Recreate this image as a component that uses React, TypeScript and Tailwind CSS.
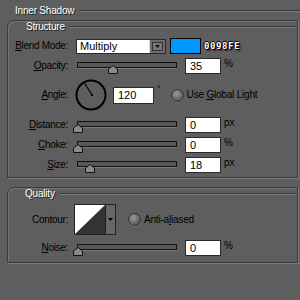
import React from 'react'

const label = "w-[60px] shrink-0 text-right text-[10px] leading-[12px] tracking-[-0.3px] text-black"
const head = "text-[10px] leading-[12px] tracking-[-0.2px] text-white [text-shadow:1px_1px_0_#222]"
const etched = "flex-1 h-[2px] border-t border-[#3a3a3a] border-b border-b-[#7c7c7c]"

function U({ c }: { c: string }) {
  return <span className="underline underline-offset-[1px]">{c}</span>
}

function Slider({ pos }: { pos: number }) {
  return (
    <div className="relative w-[104px] h-[16px] ml-[5px] shrink-0">
      <div className="absolute left-[4px] right-0 top-[4px] h-[6px] border border-[#111] bg-[#585858] shadow-[0_1px_0_#7a7a7a]" />
      {/* thumb */}
      <svg className="absolute top-[7px]" style={{ left: pos }} width="10" height="9" viewBox="0 0 10 9">
        <polygon points="0.5,8.5 0.5,4 5,0.5 9.5,4 9.5,8.5" fill="#8a8a8a" stroke="#111" strokeWidth="1" />
      </svg>
    </div>
  )
}

function NumBox({ value, w = 36, h = 16 }: { value: string; w?: number; h?: number }) {
  return (
    <div
      className="ml-[8px] shrink-0 border border-[#2a2a2a] bg-white pl-[4px] text-[11px] leading-[14px] text-black flex items-center"
      style={{ width: w, height: h }}
    >
      {value}
    </div>
  )
}

function Radio() {
  return (
    <div className="w-[13px] h-[13px] shrink-0 rounded-full border border-[#333] bg-[radial-gradient(circle_at_40%_35%,#9a9a9a,#5a5a5a_70%,#444)] shadow-[0_1px_0_#777]" />
  )
}

function Unit({ t }: { t: string }) {
  return <span className="ml-[3px] -mt-[4px] text-[10px] leading-[12px] text-black">{t}</span>
}

export default function App() {
  return (
    <div className="w-[300px] h-[300px] overflow-hidden bg-[#5e5e5e] font-['Liberation_Sans',Arial,sans-serif] select-none">
      {/* Title */}
      <div className="flex items-center h-[20px] pt-[2px] pl-[15px]">
        <span className={head}>Inner Shadow</span>
        <div className={`${etched} ml-[6px]`} />
      </div>

      {/* Structure group */}
      <div className="ml-[7px] w-[291px] h-[158px] border border-[#3a3a3a] rounded-tl-[7px] shadow-[1px_1px_0_#7c7c7c,inset_1px_1px_0_#747474]">
        <div className="flex items-center h-[11px] pl-[18px]">
          <span className={head}>Structure</span>
          <div className={`${etched} ml-[5px]`} />
        </div>

        {/* Blend Mode */}
        <div className="flex items-center h-[16px] mt-[6px]">
          <span className={label}><U c="B" />lend Mode:</span>
          <div className="ml-[8px] w-[90px] h-[15px] flex border border-[#2a2a2a] bg-white">
            <span className="flex-1 pl-[3px] text-[11px] leading-[13px] text-black">Multiply</span>
            <div className="w-[16px] h-full bg-[#6c6c6c] border-l border-[#ddd] flex items-center justify-center">
              <div className="w-[11px] h-[9px] border border-[#333] bg-[#777] flex items-center justify-center">
                <svg width="5" height="3" viewBox="0 0 5 3"><path d="M0 0 L2.5 3 L5 0Z" fill="#111" /></svg>
              </div>
            </div>
          </div>
          <div className="ml-[4px] w-[31px] h-[16px] border border-black bg-[#0098fe]" />
          <span className="ml-[3px] font-['DejaVu_Sans_Mono',monospace] font-bold text-[9px] leading-[10px] tracking-[0.6px] text-white [text-shadow:1px_1px_0_#000,-1px_0_0_#000,0_-1px_0_#000,2px_2px_2px_#222]">0098FE</span>
        </div>

        {/* Opacity */}
        <div className="flex items-center h-[16px] mt-[4px]">
          <span className={label}><U c="O" />pacity:</span>
          <Slider pos={35} />
          <NumBox value="35" />
          <Unit t="%" />
        </div>

        {/* Angle */}
        <div className="flex items-center h-[32px] mt-[5px]">
          <span className={label}><U c="A" />ngle:</span>
          <svg className="ml-[7px] shrink-0" width="32" height="32" viewBox="0 0 32 32">
            <circle cx="16" cy="16" r="14.5" fill="none" stroke="#000" strokeWidth="2" />
            <line x1="17" y1="16" x2="9.5" y2="4" stroke="#000" strokeWidth="1.2" />
            <rect x="16" y="15" width="2" height="2" fill="#000" />
          </svg>
          <div className="ml-[-2px]">
            <NumBox value="120" w={41} h={17} />
          </div>
          <span className="ml-[3px] -mt-[10px] text-[9px] text-black">°</span>
          <div className="ml-[10px]"><Radio /></div>
          <span className="ml-[3px] text-[10px] leading-[12px] tracking-[-0.2px] text-black">Use <U c="G" />lobal Light</span>
        </div>

        {/* Distance */}
        <div className="flex items-center h-[16px] mt-[6px]">
          <span className={label}><U c="D" />istance:</span>
          <Slider pos={0} />
          <NumBox value="0" />
          <Unit t="px" />
        </div>

        {/* Choke */}
        <div className="flex items-center h-[16px] mt-[4px]">
          <span className={label}><U c="C" />hoke:</span>
          <Slider pos={0} />
          <NumBox value="0" />
          <Unit t="%" />
        </div>

        {/* Size */}
        <div className="flex items-center h-[16px] mt-[4px]">
          <span className={label}><U c="S" />ize:</span>
          <Slider pos={12} />
          <NumBox value="18" />
          <Unit t="px" />
        </div>
      </div>

      {/* Quality group */}
      <div className="mt-[9px] ml-[7px] w-[291px] h-[76px] border border-[#3a3a3a] rounded-tl-[7px] shadow-[1px_1px_0_#7c7c7c,inset_1px_1px_0_#747474]">
        <div className="flex items-center h-[12px] pl-[17px]">
          <span className={head}>Quality</span>
          <div className={`${etched} ml-[5px]`} />
        </div>

        {/* Contour */}
        <div className="flex items-center h-[31px] mt-[4px]">
          <span className={label}>Contour:</span>
          <div className="ml-[6px] w-[42px] h-[31px] flex border border-[#222] shrink-0">
            <svg width="30" height="29" viewBox="0 0 30 29" className="shrink-0">
              <rect width="30" height="29" fill="#fff" />
              <polygon points="0,29 30,0 30,29" fill="#333" />
            </svg>
            <div className="flex-1 border-l border-[#222] bg-[#666] flex items-center justify-center">
              <svg width="5" height="3" viewBox="0 0 5 3"><path d="M0 0 L2.5 3 L5 0Z" fill="#000" /></svg>
            </div>
          </div>
          <div className="ml-[12px]"><Radio /></div>
          <span className="ml-[3px] text-[10px] leading-[12px] tracking-[-0.2px] text-black">Anti-a<U c="l" />iased</span>
        </div>

        {/* Noise */}
        <div className="flex items-center h-[16px] mt-[5px]">
          <span className={label}><U c="N" />oise:</span>
          <Slider pos={0} />
          <NumBox value="0" />
          <Unit t="%" />
        </div>
      </div>
    </div>
  )
}
